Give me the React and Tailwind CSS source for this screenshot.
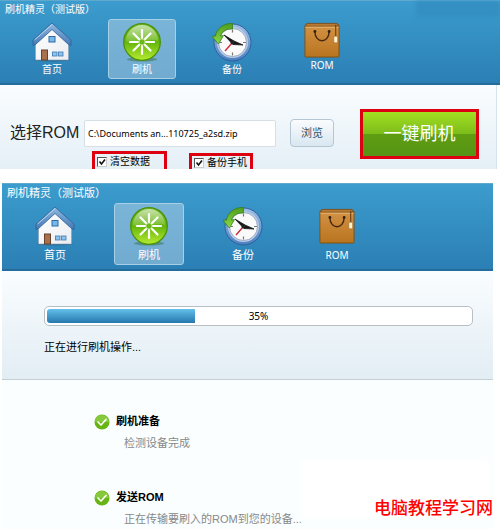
import React from 'react';
import clsx from 'clsx';

const HomeIcon = ({ className }) => (
  <svg viewBox="0 0 40 40" className={className} aria-hidden="true">
    <defs>
      <linearGradient id="roof" x1="0" y1="0" x2="0" y2="1">
        <stop offset="0" stopColor="#8fb9e2" />
        <stop offset="1" stopColor="#4478b4" />
      </linearGradient>
      <linearGradient id="wall" x1="0" y1="0" x2="1" y2="1">
        <stop offset="0" stopColor="#ffffff" />
        <stop offset="1" stopColor="#ebedf1" />
      </linearGradient>
    </defs>
    <ellipse cx="20" cy="38" rx="18" ry="1.5" fill="#1b4f78" opacity="0.5" />
    <path d="M3.500 17 20 4l16.500 13v21h-33z" fill="url(#wall)" stroke="#8b9bb0" strokeWidth="0.6" />
    <path d="M20 1 1 18v5.500l2.500-1L20 7.500l16.500 15 2.500 1V18z" fill="url(#roof)" stroke="#2f5f96" strokeWidth="0.8" strokeLinejoin="round" />
    <path d="M20 2.500 2.500 18" stroke="#c5ddf3" strokeWidth="0.9" />
    <rect x="17" y="14.500" width="6" height="5.500" fill="#79b8ea" stroke="#2c6aa8" />
    <rect x="9.500" y="28" width="6" height="10" fill="#a8714d" stroke="#69402a" />
    <rect x="20.500" y="30" width="4.500" height="4" fill="#8cc4ee" stroke="#3f78b0" strokeWidth="0.8" />
    <rect x="26.500" y="30" width="4.500" height="4" fill="#8cc4ee" stroke="#3f78b0" strokeWidth="0.8" />
  </svg>
);

const FlashIcon = ({ className }) => (
  <svg viewBox="0 0 40 40" className={className} aria-hidden="true">
    <defs>
      <linearGradient id="ball" x1="0" y1="0" x2="0" y2="1">
        <stop offset="0" stopColor="#74b82c" />
        <stop offset="0.5" stopColor="#64b50c" />
        <stop offset="1" stopColor="#b5ea30" />
      </linearGradient>
      <linearGradient id="gloss" x1="0" y1="0" x2="0" y2="1">
        <stop offset="0" stopColor="#ffffff" stopOpacity="0.6" />
        <stop offset="1" stopColor="#ffffff" stopOpacity="0.1" />
      </linearGradient>
    </defs>
    <ellipse cx="20" cy="37.5" rx="15" ry="2" fill="#2a5f30" opacity="0.4" />
    <circle cx="20" cy="20" r="18.3" fill="url(#ball)" stroke="#4b910d" strokeWidth="1.3" />
    <path d="M4 19a16 16 0 0 1 32 0C27 15 13 24 4 19z" fill="url(#gloss)" />
    <g stroke="#ffffff" strokeWidth="2.2" strokeLinecap="round">
      <path d="M20 8v8M20 24v8M8 20h8M24 20h8M11.5 11.5l5.7 5.7M22.8 22.8l5.7 5.7M28.5 11.5l-5.7 5.7M17.2 22.8l-5.7 5.7" />
    </g>
    <circle cx="20" cy="20" r="3" fill="#6db81c" stroke="#c4e890" strokeWidth="0.8" />
  </svg>
);

const BackupIcon = ({ className }) => (
  <svg viewBox="0 0 40 40" className={className} aria-hidden="true">
    <defs>
      <linearGradient id="rim" x1="0" y1="0" x2="0" y2="1">
        <stop offset="0" stopColor="#9fc0e8" />
        <stop offset="1" stopColor="#4c7fc0" />
      </linearGradient>
      <linearGradient id="arrow" x1="0" y1="0" x2="0" y2="1">
        <stop offset="0" stopColor="#4e9e20" />
        <stop offset="1" stopColor="#8bd844" />
      </linearGradient>
    </defs>
    <circle cx="20.5" cy="20.5" r="18.5" fill="url(#rim)" stroke="#2d5c97" strokeWidth="0.9" />
    <circle cx="20.5" cy="20.5" r="15.5" fill="#b7cde9" />
    <circle cx="20.5" cy="20.5" r="14" fill="#fafafa" stroke="#7d8fa8" strokeWidth="0.7" />
    <path d="M20.5 7.5v3M20.5 30.5v3M31 20.5h3M8 20.5h2" stroke="#777777" strokeWidth="1.2" />
    <path d="m20 21-7 8" stroke="#cc2933" strokeWidth="1.4" />
    <path d="m12 13 10 6 9 4-10-.5z" fill="#161616" stroke="#161616" strokeWidth="0.8" strokeLinejoin="round" />
    <circle cx="20.5" cy="20.5" r="2" fill="#222222" />
    <path d="M20.5 1.5C11 1 4.500 7 3.500 14L0 14.500 6.500 22 11.500 13.500 8.500 14C10 9.500 14 6.500 20.500 7z" fill="url(#arrow)" stroke="#36801a" strokeWidth="0.8" strokeLinejoin="round" />
  </svg>
);

const BagIcon = ({ className }) => (
  <svg viewBox="0 0 38 38" className={className} aria-hidden="true">
    <defs>
      <linearGradient id="bag" x1="0" y1="0" x2="0" y2="1">
        <stop offset="0" stopColor="#d39345" />
        <stop offset="1" stopColor="#b9741f" />
      </linearGradient>
    </defs>
    <rect x="1" y="3" width="36" height="34" rx="1" fill="url(#bag)" stroke="#80500f" />
    <path d="M3 1.500h32l1.500 3h-35z" fill="#b87a33" stroke="#7c4a14" strokeWidth="0.9" />
    <path d="M1.500 5.500h35" stroke="#e8b878" />
    <path d="M11.500 10c0 13 15 13 15 0" fill="none" stroke="#4a2810" strokeWidth="1.500" />
    <circle cx="11.500" cy="10" r="1.500" fill="#33200f" />
    <circle cx="26.500" cy="10" r="1.500" fill="#33200f" />
    <path d="M33.500 3v12" stroke="#5c3413" />
    <rect x="31.500" y="15" width="4" height="7" rx="1.500" fill="#fff2cf" stroke="#99713a" strokeWidth="0.6" />
  </svg>
);

const CheckBadge = () => (
  <svg viewBox="0 0 16 16" className="h-4 w-4 shrink-0" aria-hidden="true">
    <circle cx="8" cy="8" r="7.500" fill="#67b413" />
    <path d="M1 8a7 7 0 0 1 14 0z" fill="#86c93a" />
    <path d="m4 8 3 3 5-5.500" fill="none" stroke="#ffffff" strokeWidth="1.700" strokeLinecap="round" strokeLinejoin="round" />
  </svg>
);

const tabs = [
  { label: '首页', Icon: HomeIcon },
  { label: '刷机', Icon: FlashIcon, active: true },
  { label: '备份', Icon: BackupIcon },
  { label: 'ROM', Icon: BagIcon },
];

const Header = ({ compact }) => (
  <header
    className={clsx(
      'relative border-t border-b-2 border-t-[#5fa9cf] border-b-[#236c9c] bg-linear-to-b from-[#3c9ccd] to-[#2b7fb4] text-white',
      compact ? 'pb-1 text-[10px]' : 'pb-1 text-[11px]'
    )}
  >
    {compact && <div className="absolute top-0 right-0 h-4 w-[84px] bg-[#348fc2] blur-[2px]" />}
    <h1 className={clsx('pt-[2px] pl-[5px] leading-[14px]', compact ? 'pb-[2px]' : 'pb-[3px]')}>
      刷机精灵（测试版）
    </h1>
    <nav className={clsx('flex pl-[18px]', compact ? 'gap-[22px]' : 'gap-6')}>
      {tabs.map(({ label, Icon, active }) => (
        <button
          key={label}
          type="button"
          className={clsx(
            'flex flex-col items-center rounded-[3px] border pt-[2px] leading-[14px]',
            compact ? 'h-[60px] w-[68px]' : 'h-[62px] w-[70px] gap-[2px]',
            active ? 'border-[#a5d0e8] bg-linear-to-b from-[#7ab5d8] to-[#71abd0]' : 'border-transparent'
          )}
        >
          <span className={clsx('flex w-10 shrink-0 items-center justify-center', compact && label === 'ROM' ? 'h-9' : 'h-10')}>
            <Icon className={label === 'ROM' ? 'h-9 w-[38px]' : 'h-10 w-10'} />
          </span>
          <span className={clsx(label === 'ROM' && "font-['Noto_Sans'] text-[10px]", compact && label !== 'ROM' && 'pt-px')}>
            {label}
          </span>
        </button>
      ))}
    </nav>
  </header>
);

const Option = ({ id, label, className }) => (
  <div className={clsx('flex items-center border-[3px] border-b-0 border-[#dc0010] pl-[2px]', className)}>
    <span className="relative flex h-[10px] w-[10px] shrink-0">
      <input
        id={id}
        type="checkbox"
        defaultChecked
        className="peer h-[10px] w-[10px] appearance-none border border-[#555] border-r-[#ccc] border-b-[#ccc] bg-white"
      />
      <svg viewBox="0 0 10 10" className="pointer-events-none absolute inset-0 hidden peer-checked:block" aria-hidden="true">
        <path d="m2.500 4.500 2 2.500 3.500-4.500" fill="none" stroke="#111111" strokeWidth="1.600" />
      </svg>
    </span>
    <label htmlFor={id} className="pl-[3px] text-[10px] leading-[14px] whitespace-nowrap text-black">{label}</label>
  </div>
);

const steps = [
  { title: '刷机准备', detail: '检测设备完成' },
  { title: '发送ROM', detail: '正在传输要刷入的ROM到您的设备...' },
];

const SelectPanel = () => (
  <section>
    <Header compact />
    <div className="mr-[3px] flex items-start gap-[26px] border-r border-[#d5e3ec] bg-linear-to-b from-[#fafdff] to-[#e4eff6] pt-6 pr-[17px] pl-[10px]">
      <div className="min-w-0 flex-1 pt-[10px]">
        <div className="flex h-7 items-center">
          <label htmlFor="rom" className="w-[74px] shrink-0 text-base whitespace-nowrap text-[#222]">选择ROM</label>
          <input
            id="rom"
            type="text"
            readOnly
            value="C:\Documents an...110725_a2sd.zip"
            className="h-[27px] min-w-0 flex-1 rounded-[2px] border border-[#d6dfe5] bg-white px-[3px] font-['Noto_Sans'] text-[9px] text-black"
          />
          <button
            type="button"
            className="ml-[14px] h-7 w-[44px] shrink-0 rounded-[4px] border border-[#b4c6d4] bg-linear-to-b from-[#fafcfd] to-[#d9e7f1] text-[11px] text-[#35536b]"
          >
            浏览
          </button>
        </div>
        <div className="mt-1 ml-[82px] flex items-end gap-[22px]">
          <Option id="wipe" label="清空数据" className="h-[18px] w-[75px]" />
          <Option id="backup" label="备份手机" className="h-4 w-[64px]" />
        </div>
      </div>
      <button
        type="button"
        className="h-[50px] w-[119px] shrink-0 border-[3px] border-[#dc0010] bg-[linear-gradient(#a3df22,#7cbc1a_50%,#5f9d12_50%,#559414)] text-lg text-white"
      >
        一键刷机
      </button>
    </div>
  </section>
);

const ProgressPanel = () => (
  <section className="mt-[14px] mr-[7px] ml-[2px]">
    <Header />
    <div className="border-b border-[#c3ced6] bg-linear-to-b from-[#fafdff] to-[#e2edf4] pt-[35px] pr-5 pb-6 pl-[42px]">
      <div
        role="progressbar"
        aria-label="刷机进度"
        aria-valuenow={35}
        className="relative h-5 rounded-[5px] border border-[#b8bfc4] bg-white p-[2px]"
      >
        <div className="h-full rounded-l-[3px] bg-linear-to-b from-[#64c0ea] to-[#2478ae]" style={{ width: '35%' }} />
        <span className="absolute inset-0 flex items-center justify-center font-['Noto_Sans'] text-[10px] text-black">35%</span>
      </div>
      <p className="mt-[13px] text-[11px] leading-4 text-black">正在进行刷机操作...</p>
    </div>
    <ul className="flex flex-col gap-[38px] bg-[#fafeff] pt-[33px] pb-[2px] pl-[92px]">
      {steps.map((step) => (
        <li key={step.title} className="flex gap-[6px]">
          <span className="pt-px"><CheckBadge /></span>
          <div>
            <h2 className="text-[11px] leading-4 font-bold text-black">{step.title}</h2>
            <p className="mt-[6px] pl-2 text-[11px] leading-4 text-[#888]">{step.detail}</p>
          </div>
        </li>
      ))}
    </ul>
  </section>
);

const App = () => {
  return (
    <main className="relative bg-white font-['Liberation_Sans','Noto_Sans_CJK_SC',sans-serif]">
      <SelectPanel />
      <ProgressPanel />
      {/* site mark over the faded corner */}
      <div className="absolute right-[10px] bottom-[10px] h-[60px] w-[190px] bg-white blur-[3px]" />
      <p className="absolute right-[7px] bottom-[10px] text-[17px] leading-5 font-medium text-[#ff0000]">
        电脑教程学习网
      </p>
    </main>
  );
};

export default App;
